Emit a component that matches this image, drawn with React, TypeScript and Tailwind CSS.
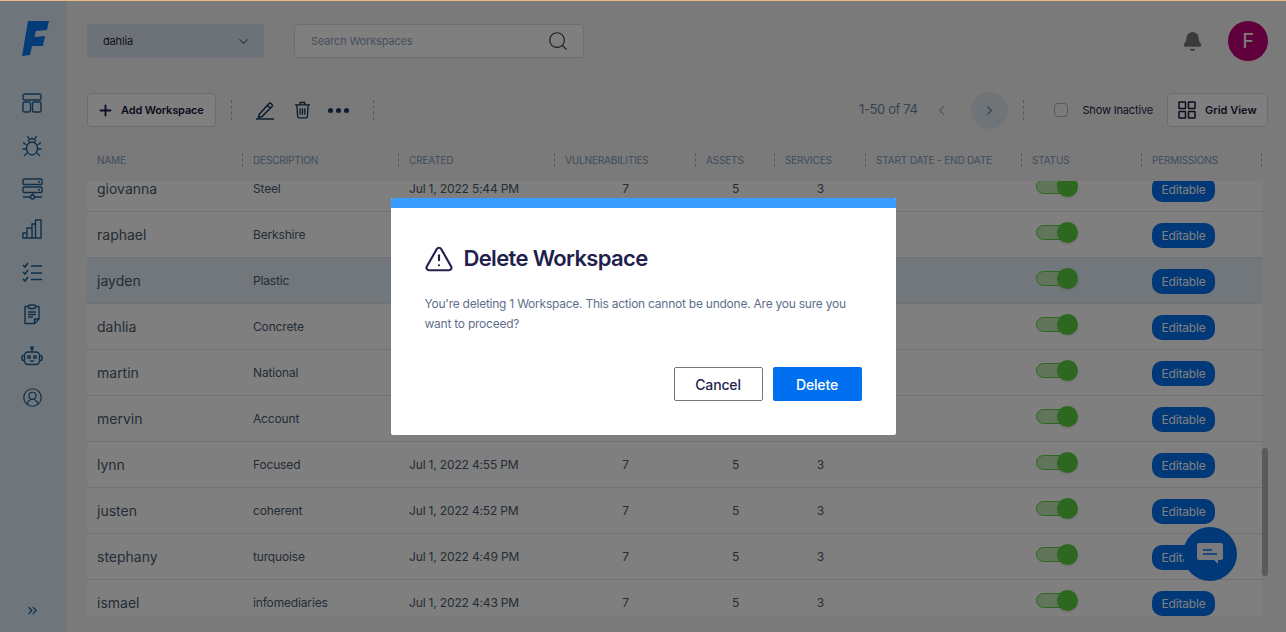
import { Bell, ChevronDown, ChevronLeft, ChevronRight, ChevronsRight, CircleUserRound, Plus, Search, TriangleAlert } from "lucide-react";

const rows = [
  { name: "giovanna", desc: "Steel", created: "Jul 1, 2022 5:44 PM" },
  { name: "raphael", desc: "Berkshire", created: "Jul 1, 2022 5:32 PM" },
  { name: "jayden", desc: "Plastic", created: "Jul 1, 2022 5:21 PM", active: true },
  { name: "dahlia", desc: "Concrete", created: "Jul 1, 2022 5:15 PM" },
  { name: "martin", desc: "National", created: "Jul 1, 2022 5:09 PM" },
  { name: "mervin", desc: "Account", created: "Jul 1, 2022 5:01 PM" },
  { name: "lynn", desc: "Focused", created: "Jul 1, 2022 4:55 PM" },
  { name: "justen", desc: "coherent", created: "Jul 1, 2022 4:52 PM" },
  { name: "stephany", desc: "turquoise", created: "Jul 1, 2022 4:49 PM" },
  { name: "ismael", desc: "infomediaries", created: "Jul 1, 2022 4:43 PM" },
];

const columns = ["Name", "Description", "Created", "Vulnerabilities", "Assets", "Services", "Start Date - End Date", "Status", "Permissions"];

const gridCols = "grid grid-cols-[156px_156px_156px_141px_79px_91px_156px_120px_120px]";

const Logo = () => (
  <svg width="27" height="35" viewBox="0 0 27 35" fill="#0a78f0">
    <path d="M6 0 L27 0 L25 9 L14 10 L12.5 16 L23 15 L21 25 L10 25 L8 34 L0 35 Z" />
  </svg>
);

const LayoutIcon = () => (
  <svg width="21" height="21" viewBox="0 0 21 21" fill="none" stroke="currentColor" strokeWidth="1.4">
    <rect x="1" y="1" width="18" height="6" rx="1.5" />
    <rect x="1" y="9" width="7.5" height="10" rx="1.5" />
    <rect x="10.5" y="9" width="8.5" height="10" rx="1.5" />
  </svg>
);

const BugIcon = () => (
  <svg width="20" height="22" viewBox="0 0 20 22" fill="none" stroke="currentColor" strokeWidth="1.4">
    <path d="M6.5 7a3.5 3.5 0 0 1 7 0" />
    <ellipse cx="10" cy="13.5" rx="5.5" ry="6.5" />
    <path d="M7 4 5.5 1M13 4l1.500-3M4.500 10 1 7.500M15.500 10 19 7.500M4 14H0.500M16 14h3.500M5 18l-3 3M15 18l3 3" />
  </svg>
);

const ServerIcon = () => (
  <svg width="21" height="22" viewBox="0 0 21 22" fill="none" stroke="currentColor" strokeWidth="1.4">
    <rect x="1" y="1" width="19" height="5.500" rx="1" />
    <rect x="1" y="9" width="19" height="5.500" rx="1" />
    <path d="M10.500 14.500V17M1 19h7M13 19h7M16 3.700h2M16 11.700h2" />
    <circle cx="10.500" cy="19" r="2" />
  </svg>
);

const ChartIcon = () => (
  <svg width="20" height="20" viewBox="0 0 20 20" fill="none" stroke="currentColor" strokeWidth="1.4">
    <path d="M1 19v-5h4v5zM5 19V9h5v10zM10 19V5h3.500v14zM13.500 19V1H19v18zM1 19h18" />
  </svg>
);

const ListIcon = () => (
  <svg width="21" height="20" viewBox="0 0 21 20" fill="none" stroke="currentColor" strokeWidth="1.600">
    <path d="M1 3l2 2 3-4M1 10l2 2 3-4M1 17l2 2 3-4" />
    <path d="M9 4h11M9 11h11M9 17.500h11" />
  </svg>
);

const ClipboardIcon = () => (
  <svg width="16" height="21" viewBox="0 0 16 21" fill="none" stroke="currentColor" strokeWidth="1.400">
    <path d="M4.500 2.500H1v17h9.500l4.500-4.500V2.500h-3.500M10.500 19.500V15H15" />
    <rect x="4.500" y="1" width="7" height="3.500" rx="1" />
    <path d="M4 8h8M4 10.500h8M4 13h5" />
  </svg>
);

const BotIcon = () => (
  <svg width="22" height="20" viewBox="0 0 22 20" fill="none" stroke="currentColor" strokeWidth="1.400">
    <circle cx="11" cy="2" r="1.300" />
    <path d="M11 3.300V6" />
    <rect x="3.500" y="6" width="15" height="12.500" rx="3.500" />
    <path d="M3.500 9.500H2a1 1 0 0 0-1 1v3a1 1 0 0 0 1 1h1.500M18.500 9.500H20a1 1 0 0 1 1 1v3a1 1 0 0 1-1 1h-1.500" />
    <circle cx="8" cy="11" r="1.300" />
    <circle cx="14" cy="11" r="1.300" />
    <path d="M9 15h4" />
  </svg>
);

const PencilIcon = () => (
  <svg width="19" height="19" viewBox="0 0 19 19" fill="none" stroke="#17375e" strokeWidth="1.500">
    <path d="M3 13.500 13 2.500a1.400 1.400 0 0 1 2 0l1 1a1.400 1.400 0 0 1 0 2L6 15.500l-3.500 1zM11.500 4.500l3 3" />
    <path d="M0 18h18" />
  </svg>
);

const TrashIcon = () => (
  <svg width="15" height="18" viewBox="0 0 16 18" fill="none" stroke="#17375e" strokeWidth="1.400">
    <path d="M0 3.500h16M5.500 3V1h5v2M2 4l.8 12a1.500 1.500 0 0 0 1.500 1.300h7.400a1.500 1.500 0 0 0 1.500-1.300L14 4M5.500 7v7M8 7v7M10.500 7v7" />
  </svg>
);

const GridIcon = () => (
  <svg width="18" height="18" viewBox="0 0 18 18" fill="none" stroke="#1a1a3a" strokeWidth="1.500">
    <rect x="1" y="1" width="6.500" height="6.500" rx="0.500" />
    <rect x="10.500" y="1" width="6.500" height="6.500" rx="0.500" />
    <rect x="1" y="10.500" width="6.500" height="6.500" rx="0.500" />
    <rect x="10.500" y="10.500" width="6.500" height="6.500" rx="0.500" />
  </svg>
);

const ChatIcon = () => (
  <svg width="26" height="22" viewBox="0 0 26 22" fill="none">
    <path d="M2 0h22a2 2 0 0 1 2 2v13a2 2 0 0 1-2 2h-3v4l-4-4H2a2 2 0 0 1-2-2V2a2 2 0 0 1 2-2z" fill="#f2f4f7" />
    <path d="M6 7h9M6 11h14" stroke="#0070f0" strokeWidth="1.500" />
  </svg>
);

const Divider = () => <span className="block h-[20px] border-l border-dashed border-[#a9b4c0]" />;

const Toggle = () => (
  <div className="-mt-[4px] flex items-center">
    <div className="h-[15px] w-[26px] rounded-l-full border border-[#5ad43e] bg-[#c2e8b8]" />
    <div className="-ml-[5px] h-[21px] w-[21px] rounded-full bg-[#58d040] shadow-sm" />
  </div>
);

const App = () => {
  return (
    <div className="relative flex h-screen w-full flex-col overflow-hidden bg-[#f4f4f4] tracking-[-0.01em] [font-family:Inter,sans-serif]">
      <div className="h-px w-full bg-[#e8b98a]" />
      <div className="flex min-h-0 flex-1">
        <aside className="flex w-[67px] flex-col items-center bg-[#dfedf6] pt-[20px] pr-[3px]">
          <span className="ml-[6px] flex"><Logo /></span>
          <div className="mt-[37px] flex flex-col items-center gap-[21px] text-[#1f5f94]">
            <LayoutIcon />
            <BugIcon />
            <ServerIcon />
            <span className="flex -translate-y-[2px]"><ChartIcon /></span>
            <ListIcon />
            <span className="mt-[1px] flex"><ClipboardIcon /></span>
            <BotIcon />
            <CircleUserRound size={21} strokeWidth={1.4} />
          </div>
          <ChevronsRight size={15} className="mt-auto mb-[14px] text-[#1f5f94]" />
        </aside>

        <main className="flex min-w-0 flex-1 flex-col pt-[23px] pl-[20px]">
          <div className="flex h-[34px] items-center pr-[18px]">
            <div className="flex h-full w-[177px] items-center justify-between rounded-sm bg-[#d8e5ee] pr-[13px] pl-[16px] text-[11px] text-[#2a1a4a]">
              dahlia
              <ChevronDown size={15} className="text-[#5d7a98]" />
            </div>
            <div className="ml-[30px] flex h-full w-[290px] items-center justify-between rounded-sm border border-[#d8dee6] bg-white pr-[14px] pl-[16px] text-[11px] text-[#8da2ba]">
              Search Workspaces
              <Search size={22} strokeWidth={1.2} className="text-[#333]" />
            </div>
            <Bell size={21} fill="#777" className="ml-auto text-[#777]" />
            <div className="ml-[25px] flex h-[40px] w-[40px] items-center justify-center rounded-full bg-[#c00078] text-[20px] text-white">F</div>
          </div>

          <div className="mt-[35px] flex h-[34px] items-center pr-[18px]">
            <button className="flex h-full w-[129px] items-center rounded-sm border border-[#d5dde6] bg-white pl-[9px] text-[11px] font-semibold text-[#1a1a3a]">
              <Plus size={17} strokeWidth={2.6} className="mr-[7px] text-[#1a1a4a]" />
              Add Workspace
            </button>
            <span className="ml-[15px]"><Divider /></span>
            <span className="ml-[24px] flex"><PencilIcon /></span>
            <span className="ml-[20px] flex"><TrashIcon /></span>
            <span className="ml-[18px] flex gap-[3px]">
              <i className="h-[5px] w-[5px] rounded-full bg-[#17375e]" />
              <i className="h-[5px] w-[5px] rounded-full bg-[#17375e]" />
              <i className="h-[5px] w-[5px] rounded-full bg-[#17375e]" />
            </span>
            <span className="ml-[24px]"><Divider /></span>

            <span className="ml-auto text-[13px] tracking-[-0.03em] text-[#73879c]">1-50 of 74</span>
            <ChevronLeft size={15} strokeWidth={2.5} className="ml-[17px] text-[#a9b8c8]" />
            <div className="ml-[22px] flex h-[37px] w-[37px] items-center justify-center rounded-full bg-[#dfe9f2]">
              <ChevronRight size={15} strokeWidth={2.5} className="text-[#7f97ae]" />
            </div>
            <span className="ml-[15px]"><Divider /></span>
            <span className="ml-[30px] h-[14px] w-[14px] rounded-sm border border-[#aab0b8] bg-[#f7f7f7]" />
            <span className="ml-[14px] text-[11px] text-[#2a1a4a]">Show Inactive</span>
            <button className="ml-[14px] flex h-full w-[101px] items-center rounded-sm border border-[#d5dde6] bg-white pl-[10px] text-[11px] font-semibold tracking-normal text-[#1a1a3a]">
              <GridIcon />
              <span className="ml-[9px]">Grid View</span>
            </button>
          </div>

          <div className={`${gridCols} mt-[23px] h-[20px] w-[1175px] items-center`}>
            {columns.map((col) => (
              <div key={col} className="flex items-center justify-between pl-[10px] text-[10px] text-[#7f9ab5] uppercase">
                {col}
                <span className="h-[14px] border-l border-dashed border-[#a9b4c0]" />
              </div>
            ))}
          </div>

          <div className="mt-[11px] flex h-[435px]">
            <div className="flex w-[1175px] flex-col justify-end overflow-hidden bg-white">
              <div className="-mb-[10px] shrink-0">
                {rows.map((row) => (
                  <div
                    key={row.name}
                    className={`${gridCols} h-[46px] items-center border-b border-[#dfe3e8] text-[#4a5a6c] ${row.active ? "bg-[#e2eef5]" : ""}`}
                  >
                    <div className="pl-[10px] text-[14px] tracking-normal">{row.name}</div>
                    <div className="pl-[10px] text-[12px]">{row.desc}</div>
                    <div className="pl-[10px] text-[12px]">{row.created}</div>
                    <div className="text-center text-[12px]">7</div>
                    <div className="text-center text-[12px]">5</div>
                    <div className="text-center text-[12px]">3</div>
                    <div />
                    <div className="pl-[14px]"><Toggle /></div>
                    <div className="pl-[10px]">
                      <span className="mt-[2px] block h-[25px] w-[63px] rounded-[10px] bg-[#0070f0] text-center text-[12px] leading-[25px] text-white">Editable</span>
                    </div>
                  </div>
                ))}
              </div>
            </div>
            <div className="mt-[267px] h-[128px] w-[6px] rounded-full bg-[#b5b5b5]" />
          </div>
        </main>
      </div>

      <div className="absolute top-[527px] left-[1183px] flex h-[54px] w-[54px] items-center justify-center rounded-full bg-[#0070f0]">
        <ChatIcon />
      </div>

      <div className="absolute inset-x-0 top-px bottom-0 flex items-center justify-center bg-black/50">
        <div className="h-[237px] w-[505px] overflow-hidden rounded-[2px] bg-white">
          <div className="h-[10px] bg-[#3b9cff]" />
          <div className="px-[34px] pt-[34px]">
            <div className="flex items-center text-[#231f4d]">
              <TriangleAlert size={30} strokeWidth={1.7} className="-ml-[1px]" />
              <h2 className="ml-[10px] text-[22px] font-semibold tracking-[-0.03em]">Delete Workspace</h2>
            </div>
            <p className="mt-[19px] text-[12px] leading-[20px] tracking-[-0.02em] text-[#5f6f8c]">
              You're deleting 1 Workspace. This action cannot be undone. Are you sure you want to proceed?
            </p>
            <div className="mt-[33px] flex justify-end gap-[10px]">
              <button className="h-[34px] w-[89px] rounded-[2px] border border-[#777] text-[14px] font-medium text-[#231f4d]">Cancel</button>
              <button className="h-[34px] w-[89px] rounded-[2px] bg-[#0070f0] text-[14px] font-medium text-white">Delete</button>
            </div>
          </div>
        </div>
      </div>
    </div>
  );
};

export default App;
